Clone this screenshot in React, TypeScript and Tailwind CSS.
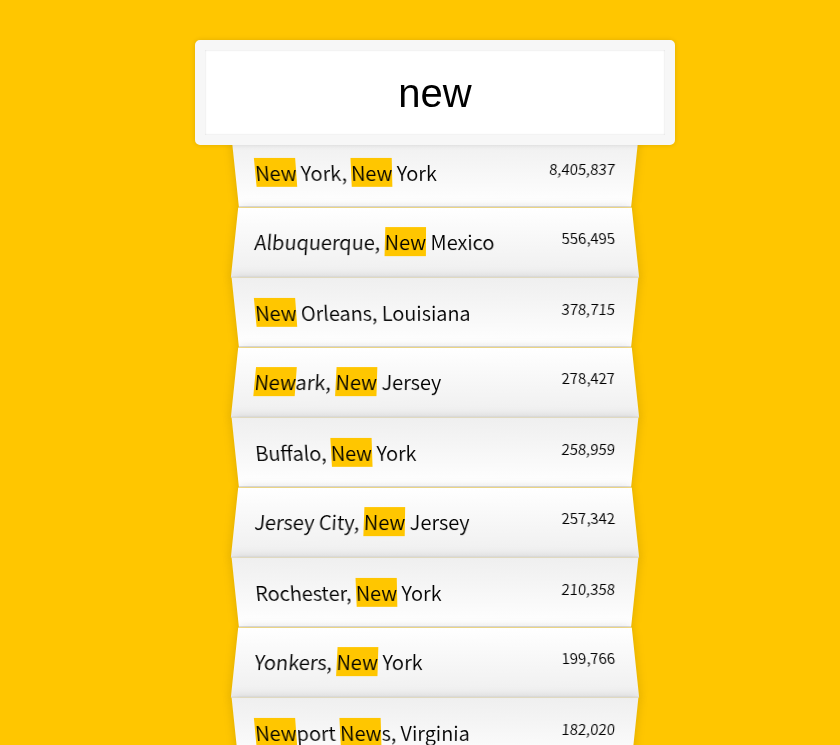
import { useState } from "react";

type Place = { city: string; state: string; population: number };

const places: Place[] = [
  { city: "New York", state: "New York", population: 8405837 },
  { city: "Albuquerque", state: "New Mexico", population: 556495 },
  { city: "New Orleans", state: "Louisiana", population: 378715 },
  { city: "Newark", state: "New Jersey", population: 278427 },
  { city: "Buffalo", state: "New York", population: 258959 },
  { city: "Jersey City", state: "New Jersey", population: 257342 },
  { city: "Rochester", state: "New York", population: 210358 },
  { city: "Yonkers", state: "New York", population: 199766 },
  { city: "Newport News", state: "Virginia", population: 182020 },
];

function Highlighted({ text, query }: { text: string; query: string }) {
  if (!query) return <>{text}</>;
  const escaped = query.replace(/[.*+?^${}()|[\]\\]/g, "\\$&");
  const parts = text.split(new RegExp(`(${escaped})`, "gi"));
  return (
    <>
      {parts.map((part, i) =>
        i % 2 === 1 ? (
          <mark key={i} className="bg-[#ffc600] text-inherit">
            {part}
          </mark>
        ) : (
          part
        ),
      )}
    </>
  );
}

export default function App() {
  const [query, setQuery] = useState("new");
  const matches = places.filter((p) =>
    `${p.city}, ${p.state}`.toLowerCase().includes(query.toLowerCase()),
  );

  return (
    <main className="min-h-screen bg-[#ffc600] pt-10 pl-[30px] font-['Noto_Sans_CJK_JP','Noto_Sans',sans-serif] text-[20px] leading-[29px] font-[350] text-black">
      <form className="mx-auto max-w-[400px]" onSubmit={(e) => e.preventDefault()}>
        <div className="relative z-10 -mx-10 -mb-[10px]">
          <input
            type="text"
            aria-label="City or State"
            placeholder="City or State"
            value={query}
            onChange={(e) => setQuery(e.target.value)}
            className="block h-[105px] w-full rounded-[5px] border-[10px] border-[#f7f7f7] bg-white px-5 pt-[21px] pb-[19px] text-center font-['Liberation_Sans',Arial,sans-serif] text-[40px] leading-[45px] font-normal shadow-[0_0_5px_rgba(0,0,0,0.12),inset_0_0_2px_rgba(0,0,0,0.19)] outline-none"
          />
        </div>
        <ul className="relative">
          {matches.map((p) => (
            <li
              key={p.city}
              className="flex justify-between border-b border-[#d8d8d8] p-5 shadow-[0_0_10px_rgba(0,0,0,0.14)] odd:bg-linear-to-t odd:from-white odd:to-[#efefef] odd:[transform:perspective(100px)_rotateX(-3deg)_translateY(3px)] even:bg-linear-to-b even:from-white even:to-[#efefef] even:[transform:perspective(100px)_rotateX(3deg)_translateY(2px)_scale(1.001)]"
            >
              <span>
                <Highlighted text={`${p.city}, ${p.state}`} query={query} />
              </span>
              <span className="text-[15px] leading-[22px]">
                {p.population.toLocaleString("en-US")}
              </span>
            </li>
          ))}
        </ul>
      </form>
    </main>
  );
}
